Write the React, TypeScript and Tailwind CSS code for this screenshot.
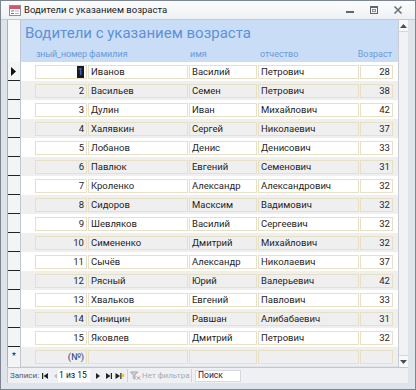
import React from "react";

const rows: [number, string, string, string, number][] = [
  [1, "Иванов", "Василий", "Петрович", 28],
  [2, "Васильев", "Семен", "Петрович", 38],
  [3, "Дулин", "Иван", "Михайлович", 42],
  [4, "Халявкин", "Сергей", "Николаевич", 37],
  [5, "Лобанов", "Денис", "Денисович", 33],
  [6, "Павлюк", "Евгений", "Семенович", 31],
  [7, "Кроленко", "Александр", "Александрович", 32],
  [8, "Сидоров", "Масксим", "Вадимович", 32],
  [9, "Шевляков", "Василий", "Сергеевич", 32],
  [10, "Симененко", "Дмитрий", "Михайлович", 32],
  [11, "Сычёв", "Александр", "Николаевич", 37],
  [12, "Рясный", "Юрий", "Валерьевич", 42],
  [13, "Хвальков", "Евгений", "Павлович", 33],
  [14, "Синицин", "Равшан", "Алибабаевич", 31],
  [15, "Яковлев", "Дмитрий", "Петрович", 32],
];

const font = { fontFamily: 'Roboto, "Noto Sans", sans-serif' };

function Box({ w, right, children }: { w: string; right?: boolean; children?: React.ReactNode }) {
  return (
    <div
      className={`${w} h-[14px] border border-[#e6e0c6] flex items-center overflow-hidden whitespace-nowrap px-[2px] ${right ? "justify-end" : "justify-start"}`}
    >
      {children}
    </div>
  );
}

function Row({ r, i }: { r: [number, string, string, string, number]; i: number }) {
  const alt = i % 2 === 1;
  return (
    <div className={`h-[19px] pt-[3px] flex pl-[14px] gap-[1px] ${alt ? "bg-[#efefef]" : "bg-white"}`}>
      <Box w="w-[52px]" right>
        {r[0] === 1 ? <span className="bg-[#1a1a1a] text-[#8080e0] px-[1px] leading-[12px]">1</span> : r[0]}
      </Box>
      <Box w="w-[100px]">{r[1]}</Box>
      <Box w="w-[68px]">{r[2]}</Box>
      <Box w="w-[101px]">{r[3]}</Box>
      <Box w="w-[33px]" right>{r[4]}</Box>
    </div>
  );
}

export default function App() {
  return (
    <div
      className="w-[416px] h-[390px] bg-[#dfe4ea] border border-[#7d8590] flex flex-col text-[#1e1e1e] text-[9.5px]"
      style={font}
    >
      {/* title bar */}
      <div className="h-[19px] flex items-center bg-gradient-to-b from-[#fbfcfd] to-[#eef1f4] border-b border-[#c4cad2] pl-[8px] pr-[12px]">
        <svg width="12" height="11" viewBox="0 0 12 11" className="mr-[3px]">
          <rect x="0.5" y="0.5" width="11" height="10" fill="#ffffff" stroke="#8a8f99" />
          <rect x="1" y="1" width="10" height="3" fill="#d4566a" />
          <rect x="2" y="5.5" width="3" height="1" fill="#5a7fc0" />
          <rect x="6" y="5.5" width="4" height="1" fill="#9fb6dc" />
          <rect x="2" y="8" width="3" height="1" fill="#5a7fc0" />
          <rect x="6" y="8" width="4" height="1" fill="#9fb6dc" />
        </svg>
        <span className="text-[9.5px] text-[#1b1b1b]">Водители с указанием возраста</span>
        <div className="ml-auto flex items-center gap-[14px]">
          <svg width="10" height="10" viewBox="0 0 10 10">
            <rect x="1" y="6" width="8" height="2" fill="#5e6670" />
          </svg>
          <svg width="10" height="10" viewBox="0 0 10 10">
            <rect x="1.5" y="1.5" width="7" height="7" fill="none" stroke="#5e6670" />
            <rect x="1" y="1" width="8" height="2" fill="#5e6670" />
            <rect x="3.5" y="4.5" width="3" height="2" fill="none" stroke="#8a929c" />
          </svg>
          <svg width="10" height="10" viewBox="0 0 10 10">
            <path d="M1.5 1.5 L8.5 8.5 M8.5 1.5 L1.5 8.5" stroke="#6a727c" strokeWidth="1.6" />
          </svg>
        </div>
      </div>

      <div className="flex-1 flex flex-col pl-[6px] pr-[7px]">
        <div className="flex h-[347px] border-l border-[#a9b1bb]">
          {/* record selectors */}
          <div className="w-[13px] flex flex-col bg-[#f3f4f6] border-r border-[#c2c7ce]">
            <div className="h-[42px] bg-[#f7f8fa]" />
            {rows.map((r) => (
              <div key={r[0]} className="h-[19px] border-b border-[#222] flex items-center justify-center">
                {r[0] === 1 && (
                  <svg width="6" height="9" viewBox="0 0 6 9">
                    <path d="M0 0 L5 4.5 L0 9 Z" fill="#111" />
                  </svg>
                )}
              </div>
            ))}
            <div className="h-[19px] flex items-center justify-center text-[9px] leading-none">*</div>
          </div>
          {/* detail */}
          <div className="w-[378px] flex flex-col">
            <div className="h-[42px] bg-[#c9ddf6] flex flex-col">
              <div className="h-[27px] pl-[4px] pt-[2px] text-[15px] text-[#5e91d8] leading-[22px]">
                Водители с указанием возраста
              </div>
              <div className="h-[15px] flex pl-[14px] gap-[1px] text-[9px] text-[#6c9ad8] leading-[14px] whitespace-nowrap">
                <div className="w-[52px] pl-[1px] tracking-[-0.2px]">зный_номер</div>
                <div className="w-[100px] pl-[1px]">фамилия</div>
                <div className="w-[68px] pl-[1px]">имя</div>
                <div className="w-[101px] pl-[2px]">отчество</div>
                <div className="w-[33px] flex justify-end pr-[1px]">Возраст</div>
              </div>
            </div>
            {rows.map((r, i) => (
              <Row key={r[0]} r={r} i={i} />
            ))}
            <div className="h-[19px] pt-[3px] flex pl-[14px] gap-[1px] bg-[#efefef]">
              <Box w="w-[52px]" right>
                <span className="text-[#2a3a7a]">(№)</span>
              </Box>
              <Box w="w-[100px]" />
              <Box w="w-[68px]" />
              <Box w="w-[101px]" />
              <Box w="w-[33px]" />
            </div>
          </div>
          {/* scrollbar */}
          <div className="w-[10px] flex flex-col bg-[#f1f2f4] border-l border-[#c9cdd3]">
            <div className="h-[12px] flex items-center justify-center bg-[#f7f8f9] border-b border-[#d4d7dc]">
              <svg width="7" height="4" viewBox="0 0 7 4">
                <path d="M0 4 L3.5 0 L7 4 Z" fill="#4a5058" />
              </svg>
            </div>
            <div className="flex-1" />
            <div className="h-[12px] flex items-center justify-center bg-[#f7f8f9] border-t border-[#d4d7dc]">
              <svg width="7" height="4" viewBox="0 0 7 4">
                <path d="M0 0 L3.5 4 L7 0 Z" fill="#4a5058" />
              </svg>
            </div>
          </div>
        </div>

        {/* navigation bar */}
        <div className="h-[16px] flex items-center bg-[#eef0f3] border-t border-[#c3c8cf] border-l border-[#a9b1bb] text-[8px] text-[#3a4a6a] pl-[2px] whitespace-nowrap">
          <div className="w-[31px] flex-none text-[#4a5a7a]">Записи:</div>
          <div className="w-[11px] flex-none flex items-center">
            <svg width="8" height="8" viewBox="0 0 8 8">
              <rect x="1" y="1" width="1.2" height="6" fill="#222" />
              <path d="M7 1 L2.5 4 L7 7 Z" fill="#222" />
            </svg>
          </div>
          <div className="w-[6px] flex-none flex items-center">
            <svg width="6" height="8" viewBox="0 0 6 8">
              <path d="M5 1.5 L2 4 L5 6.5 Z" fill="#b8bec6" />
            </svg>
          </div>
          <div className="w-[32px] flex-none h-[12px] bg-white flex items-center pl-[1px] text-[#111] text-[8.5px]">1 из 15</div>
          <div className="w-[5px] flex-none" />
          <div className="w-[10px] flex-none flex items-center">
            <svg width="6" height="8" viewBox="0 0 6 8">
              <path d="M1 1 L5 4 L1 7 Z" fill="#222" />
            </svg>
          </div>
          <div className="w-[10px] flex-none flex items-center">
            <svg width="8" height="8" viewBox="0 0 8 8">
              <path d="M1 1 L5.5 4 L1 7 Z" fill="#222" />
              <rect x="5.8" y="1" width="1.2" height="6" fill="#222" />
            </svg>
          </div>
          <div className="w-[12px] flex-none flex items-center">
            <svg width="10" height="8" viewBox="0 0 10 8">
              <path d="M0.5 1 L5 4 L0.5 7 Z" fill="#222" />
              <rect x="5.3" y="1" width="1.2" height="6" fill="#222" />
              <path d="M8 1 L8.6 2.6 L10 2.8 L8.9 3.8 L9.2 5.3 L8 4.5 L6.8 5.3 L7.1 3.8 L6 2.8 L7.4 2.6 Z" fill="#f0c020" />
            </svg>
          </div>
          <div className="h-[13px] w-[1px] flex-none bg-[#d0d4da]" />
          <div className="w-[14px] flex-none flex items-center justify-center">
            <svg width="11" height="10" viewBox="0 0 12 10">
              <path d="M0.5 0.5 L8.5 0.5 L5.5 4 L5.5 8.5 L3.5 7.5 L3.5 4 Z" fill="#c8cdd4" stroke="#9aa1aa" strokeWidth="0.8" />
              <path d="M7.5 5.5 L11 9 M11 5.5 L7.5 9" stroke="#c58080" strokeWidth="1" />
            </svg>
          </div>
          <div className="w-[49px] flex-none text-[#a6acb4]">Нет фильтра</div>
          <div className="h-[13px] w-[1px] flex-none bg-[#d0d4da]" />
          <div className="w-[3px] flex-none" />
          <div className="w-[46px] flex-none h-[12px] bg-white border border-[#d6dae0] flex items-center pl-[2px] text-[#2a1040] text-[8.5px]">
            Поиск
          </div>
        </div>
      </div>
      <div className="h-[4px]" />
    </div>
  );
}
